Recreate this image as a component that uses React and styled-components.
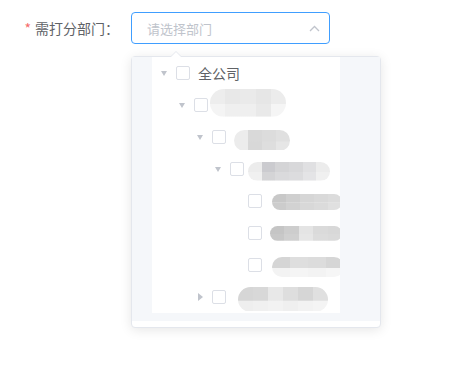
import React from 'react';
import styled, { createGlobalStyle } from 'styled-components';

const GlobalStyle = createGlobalStyle`
   body {
      margin: 0;
      background: #ffffff;
      font-family: "Helvetica Neue", "Noto Sans CJK SC", "Liberation Sans", sans-serif;
   }
`;

const Page = styled.div`
   padding: 12px 0 0 0;
   width: 473px;
   height: 358px;
`;

const FormItem = styled.div`
   display: flex;
   align-items: flex-start;
`;

const Label = styled.label`
   width: 131px;
   box-sizing: border-box;
   padding-right: 12px;
   text-align: right;
   font-size: 14px;
   line-height: 32px;
   color: #606266;
   &::before {
      content: '*';
      color: #f56c6c;
      margin-right: 4px;
   }
`;

const SelectWrap = styled.div`
   position: relative;
   width: 199px;
`;

const Input = styled.input`
   display: block;
   width: 100%;
   height: 32px;
   box-sizing: border-box;
   border: 1px solid #409eff;
   border-radius: 4px;
   padding: 0 30px 0 15px;
   font-family: inherit;
   font-size: 13px;
   color: #606266;
   outline: none;
   &::placeholder {
      color: #c0c4cc;
   }
`;

const Suffix = styled.span`
   position: absolute;
   right: 10px;
   top: 0;
   height: 32px;
   display: flex;
   align-items: center;
`;

const Dropdown = styled.div`
   position: absolute;
   top: calc(100% + 12px);
   left: 0;
   width: 250px;
   box-sizing: border-box;
   background: #ffffff;
   border: 1px solid #e4e7ed;
   border-radius: 4px;
   box-shadow: 0 2px 12px 0 rgba(0, 0, 0, 0.1);
   padding-bottom: 6px;
   &::before,
   &::after {
      content: '';
      position: absolute;
      left: 38px;
      border: 6px solid transparent;
      border-top-width: 0;
   }
   &::before {
      top: -6px;
      border-bottom-color: #e4e7ed;
   }
   &::after {
      top: -5px;
      border-bottom-color: #ffffff;
   }
`;

const ScrollArea = styled.div`
   background: #f5f7fa;
   padding: 0 40px 8px 20px;
`;

const Tree = styled.div`
   background: #ffffff;
   overflow: hidden;
`;

const Row = styled.div`
   display: flex;
   align-items: center;
   height: 32px;
   padding-left: ${p => p.$level * 18}px;
   white-space: nowrap;
`;

const Expand = styled.span`
   width: 24px;
   height: 24px;
   flex: none;
   display: flex;
   align-items: center;
   justify-content: center;
   visibility: ${p => (p.$leaf ? 'hidden' : 'visible')};
   &::before {
      content: '';
      width: 0;
      height: 0;
      ${p =>
         p.$open
            ? 'border-left: 3.5px solid transparent; border-right: 3.5px solid transparent; border-top: 5px solid #c0c4cc;'
            : 'border-top: 4px solid transparent; border-bottom: 4px solid transparent; border-left: 5px solid #c0c4cc; margin-left: 1px;'}
   }
`;

const Checkbox = styled.span`
   width: 14px;
   height: 14px;
   flex: none;
   box-sizing: border-box;
   border: 1px solid #dcdfe6;
   border-radius: 2px;
   background: #ffffff;
   margin-right: 8px;
`;

const NodeLabel = styled.span`
   font-size: 14px;
   color: #606266;
`;

const tileGradient = tiles => {
   const step = 100 / tiles.length;
   return tiles
      .map((c, i) => `${c} ${(i * step).toFixed(2)}%, ${c} ${((i + 1) * step).toFixed(2)}%`)
      .join(', ');
};

const Blob = styled.span`
   display: block;
   flex: none;
   width: ${p => p.$w}px;
   height: ${p => p.$h}px;
   margin-left: ${p => p.$dx}px;
   transform: translateY(${p => p.$dy}px);
   border-radius: ${p => Math.round(p.$h / 2)}px;
   background:
      linear-gradient(to right, ${p => tileGradient(p.$top)}) top / 100% 55% no-repeat,
      linear-gradient(to right, ${p => tileGradient(p.$bottom)}) bottom / 100% 45% no-repeat;
   filter: blur(0.6px);
`;

const nodes = [
   { level: 0, open: true, name: '全公司' },
   {
      level: 1, open: true,
      blob: { w: 76, h: 28, dx: -6, dy: -2, top: ['#ededed', '#e8e8e8', '#eaeaea', '#e6e6e6', '#ececec'], bottom: ['#f4f4f4', '#efefef', '#efefef', '#e9e9e9', '#f5f5f5'] },
   },
   {
      level: 2, open: true,
      blob: { w: 56, h: 21, dx: 0, dy: 3, top: ['#ececec', '#d9d9d9', '#dcdcdc', '#e0e0e0'], bottom: ['#ececec', '#d8d8d8', '#dedede', '#e6e6e6'] },
   },
   {
      level: 3, open: true,
      blob: { w: 82, h: 19, dx: -4, dy: 2, top: ['#ececec', '#cbcbcf', '#d4d4d6', '#d8d8da', '#e0e0e2', '#ececec'], bottom: ['#f0f0f0', '#d4d4d6', '#dadadc', '#dcdcde', '#e4e4e6', '#f0f0f0'] },
   },
   {
      level: 4, leaf: true,
      blob: { w: 70, h: 16, dx: 2, dy: 1, top: ['#c8c8c8', '#cfcfcf', '#d6d6d6', '#d9d9d9', '#dcdcdc'], bottom: ['#cccccc', '#d2d2d2', '#d8d8d8', '#dbdbdb', '#e0e0e0'] },
   },
   {
      level: 4, leaf: true,
      blob: { w: 72, h: 15, dx: 0, dy: 0, top: ['#c5c5c5', '#cdcdcd', '#e4e4e4', '#dadada', '#d8d8d8'], bottom: ['#c8c8c8', '#d0d0d0', '#e6e6e6', '#dcdcdc', '#dadada'] },
   },
   {
      level: 4, leaf: true,
      blob: { w: 72, h: 20, dx: 2, dy: 2, top: ['#d5d5d5', '#dedede', '#dcdcdc', '#d6d6d6'], bottom: ['#f3f3f3', '#f5f5f5', '#f3f3f3', '#f6f6f6'] },
   },
   {
      level: 2, open: false,
      blob: { w: 90, h: 25, dx: 4, dy: 2, top: ['#d6d6d6', '#d8d8d8', '#e8e8e8', '#dedede', '#d6d6d6', '#e0e0e0'], bottom: ['#eeeeee', '#f0f0f0', '#f2f2f2', '#efefef', '#f2f2f2', '#f4f4f4'] },
   },
];

const Chevron = () => (
   <svg width="11" height="7" viewBox="0 0 11 7">
      <path d="M1 6 L5.5 1.5 L10 6" fill="none" stroke="#c0c4cc" strokeWidth="1.3" />
   </svg>
);

const TreeNode = ({ node }) => (
   <Row $level={node.level}>
      <Expand $leaf={node.leaf} $open={node.open} />
      <Checkbox />
      {node.name ? (
         <NodeLabel>{node.name}</NodeLabel>
      ) : (
         <Blob
            $w={node.blob.w}
            $h={node.blob.h}
            $dx={node.blob.dx}
            $dy={node.blob.dy}
            $top={node.blob.top}
            $bottom={node.blob.bottom}
         />
      )}
   </Row>
);

export default function App() {
   return (
      <Page>
         <GlobalStyle />
         <FormItem>
            <Label>需打分部门：</Label>
            <SelectWrap>
               <Input placeholder="请选择部门" readOnly />
               <Suffix>
                  <Chevron />
               </Suffix>
               <Dropdown>
                  <ScrollArea>
                     <Tree>
                        {nodes.map((node, i) => (
                           <TreeNode node={node} key={i} />
                        ))}
                     </Tree>
                  </ScrollArea>
               </Dropdown>
            </SelectWrap>
         </FormItem>
      </Page>
   );
}
